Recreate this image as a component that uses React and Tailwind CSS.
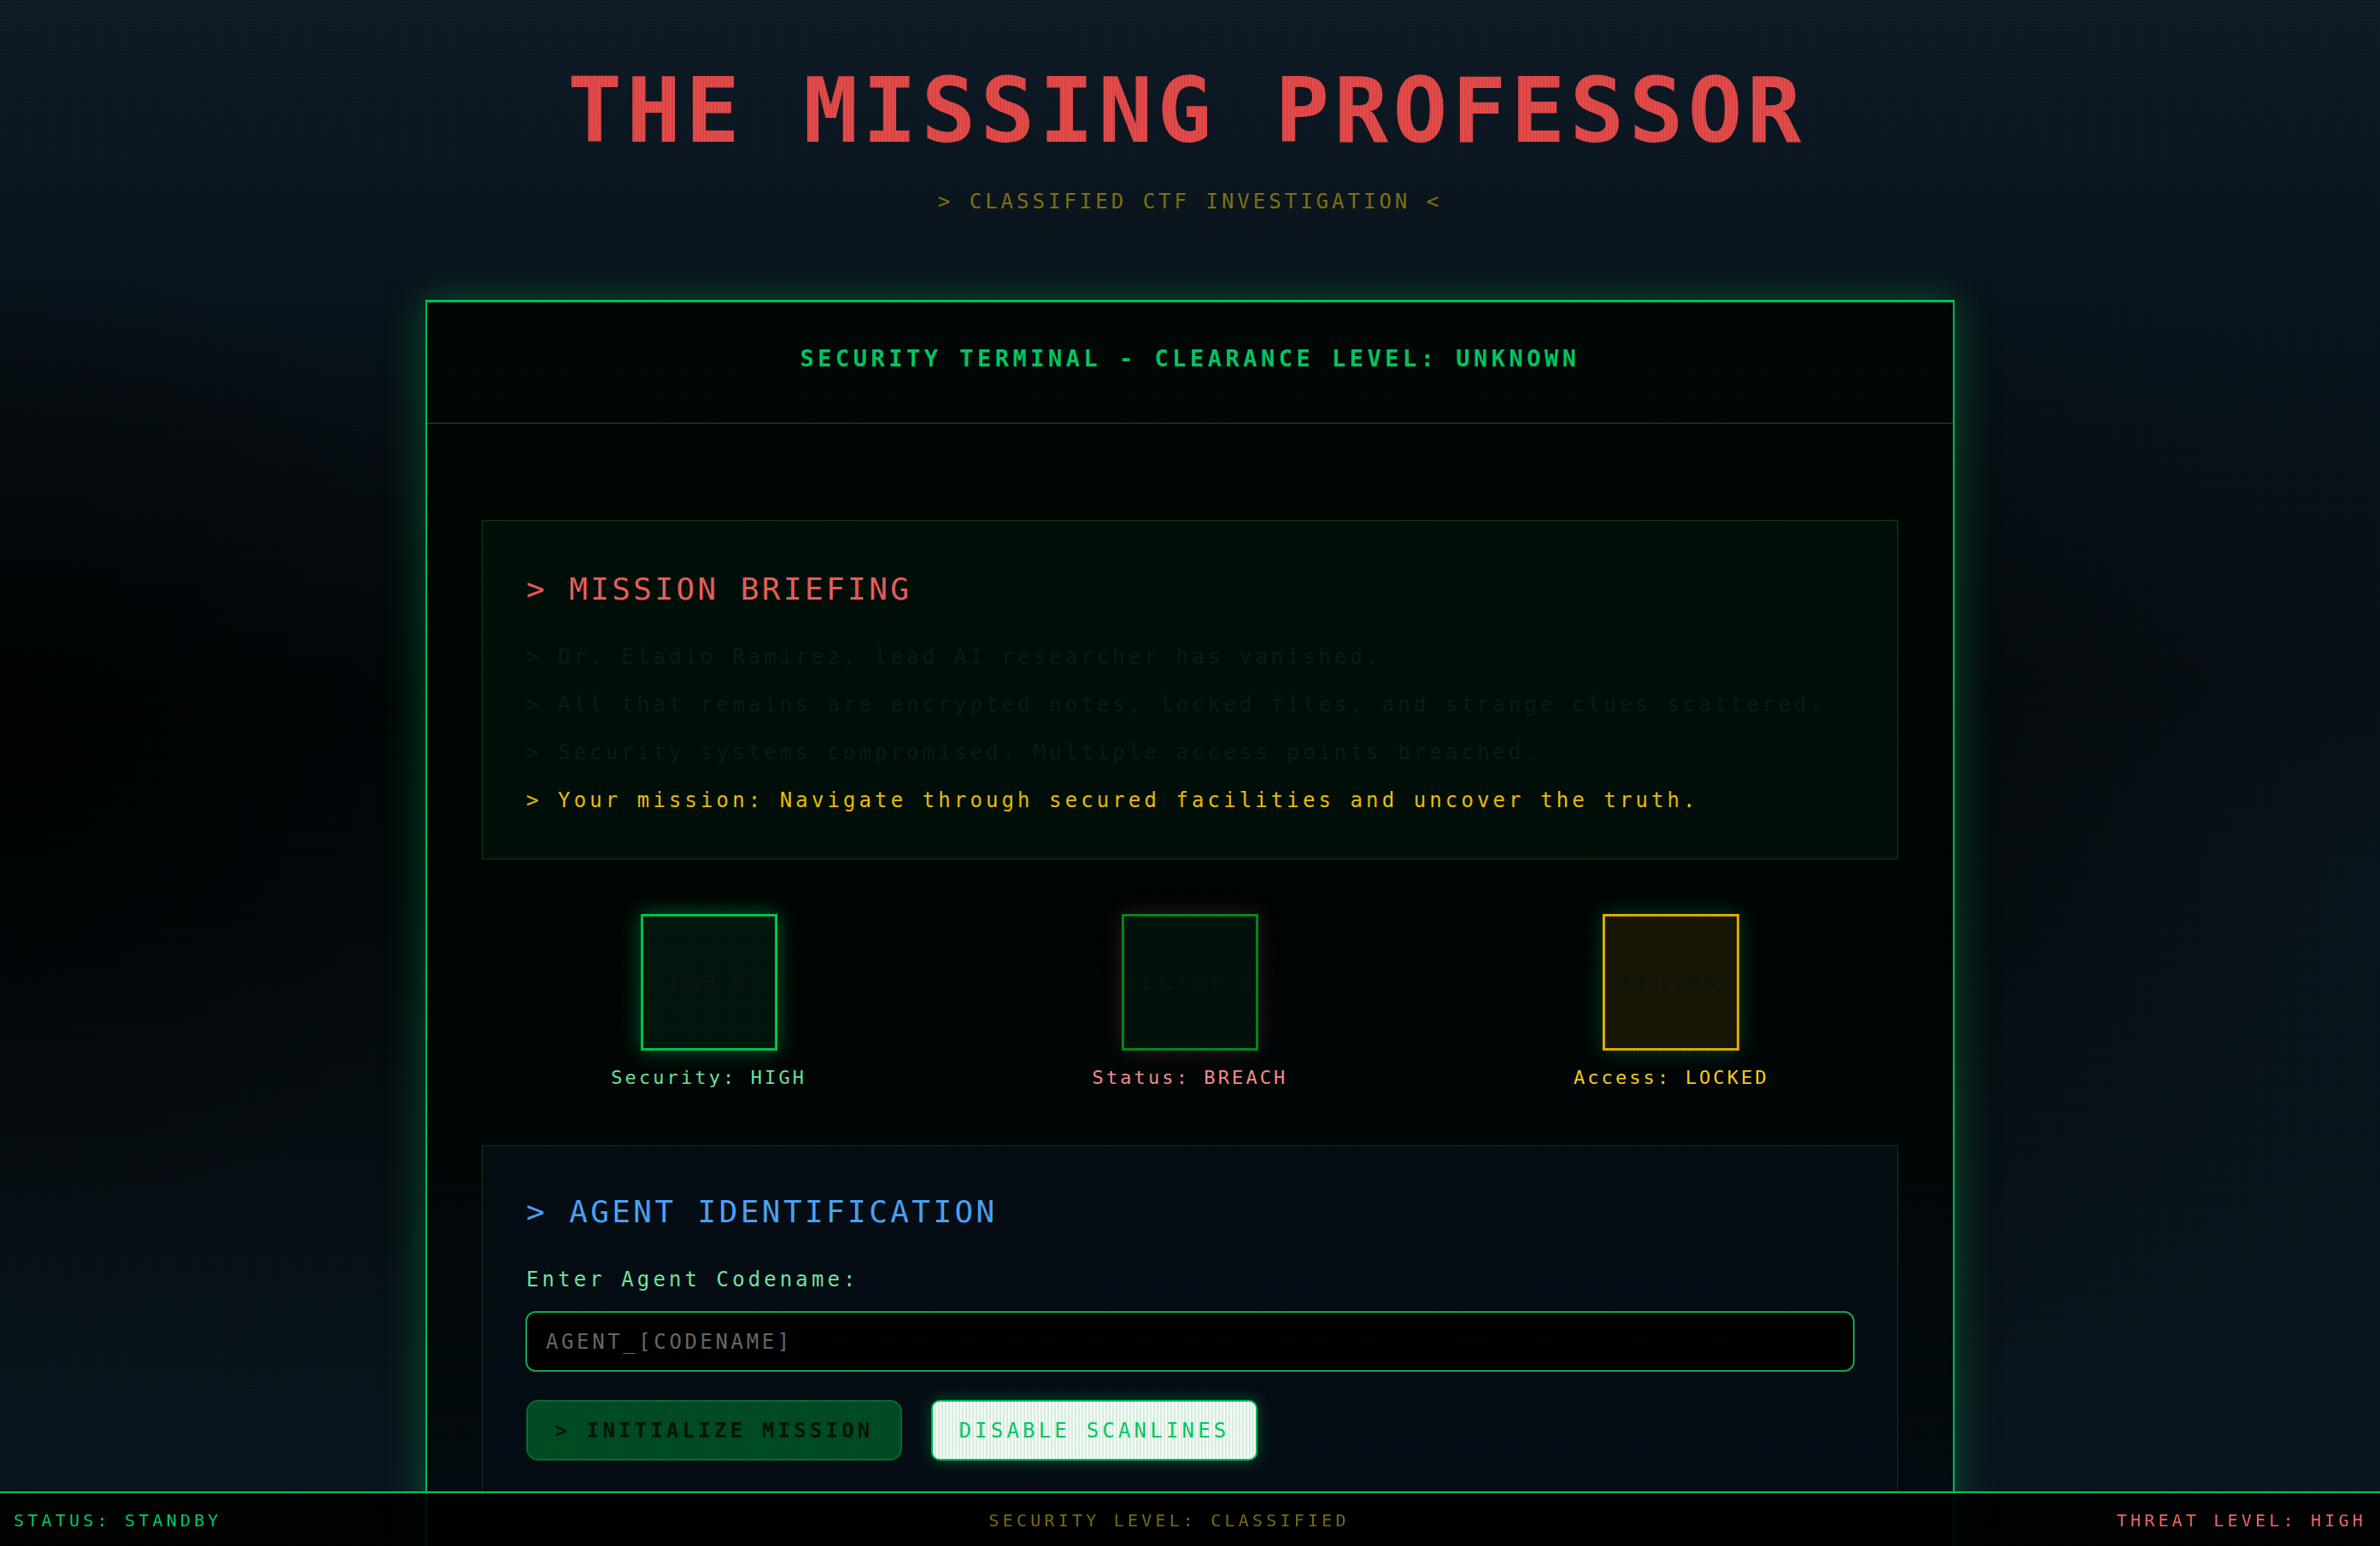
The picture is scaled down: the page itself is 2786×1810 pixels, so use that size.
import React from "react";

const mono = "font-['DejaVu_Sans_Mono',monospace]";

function StatusBox({ border, bg, shadow, title, labelA, labelB, color }) {
  return (
    <div className="flex flex-col items-center">
      <div
        className={`w-[160px] h-[160px] border-[3px] flex items-center justify-center ${border} ${bg} ${shadow}`}
      >
        <span className="font-['DejaVu_Sans',sans-serif] text-[22px] tracking-[5px] text-[#0b150f]">{title}</span>
      </div>
      <div className={`mt-4 leading-[32px] text-[22px] tracking-[3.1px] ${color}`}>
        {labelA}: {labelB}
      </div>
    </div>
  );
}

export default function App() {
  return (
    <div
      className={`relative h-screen overflow-hidden ${mono} bg-[radial-gradient(ellipse_22%_32%_at_0%_48%,rgba(0,0,0,0.75),transparent),radial-gradient(ellipse_26%_45%_at_100%_58%,rgba(16,28,40,0.55),transparent),linear-gradient(180deg,#101b28_0%,#0a131c_18%,#03070a_45%,#04090d_60%,#0a131b_90%,#0b1520_100%)]`}
    >
      {/* scanline overlay */}
      <div className="pointer-events-none fixed inset-0 z-40 bg-[repeating-linear-gradient(90deg,transparent_0px,transparent_2px,rgba(0,0,0,0.08)_2px,rgba(0,0,0,0.08)_4px)]" />
      <div className="pointer-events-none fixed inset-0 z-40 bg-[repeating-linear-gradient(0deg,transparent_0px,transparent_2px,rgba(0,255,120,0.012)_2px,rgba(0,255,120,0.012)_4px)]" />

      <header className="pt-[76px] text-center">
        <h1 className="pr-[8px] text-[106px] leading-[107px] font-bold tracking-[5.2px] text-[#e84a4a]">
          THE MISSING PROFESSOR
        </h1>
        <p className="mt-[37px] text-[24px] leading-[32px] tracking-[4px] text-[#857214]">
          &gt; CLASSIFIED CTF INVESTIGATION &lt;
        </p>
      </header>

      <main className="mx-auto mt-[99px] w-[1790px] border-2 border-t-[3px] border-[#00c65a] bg-[#010705] shadow-[0_0_45px_rgba(0,210,100,0.35)] pb-[200px]">
        <div className="border-b border-[#0a5c2c] pt-[46px] pb-[55px] text-center">
          <h2 className="text-[27px] leading-[40px] font-bold tracking-[4.5px] text-[#00cc66]">
            SECURITY TERMINAL - CLEARANCE LEVEL: UNKNOWN
          </h2>
        </div>

        <div className="px-16 pt-[113px] bg-[linear-gradient(180deg,#010604_0%,#000503_50%,#030910_100%)]">
          {/* Mission briefing */}
          <section className="border border-[#0b3d1f] bg-[#010e08] px-[51px] pt-[51px] pb-[48px]">
            <h3 className="text-[36px] leading-[58px] mb-[30px] tracking-[3.4px] text-[#f25f5c]">
              &gt; MISSION BRIEFING
            </h3>
            <div className="flex flex-col gap-4 text-[24px] leading-[40px] tracking-[4.1px]">
              <p className="text-[#0f1b14]">&gt; Dr. Eladio Ramirez, lead AI researcher has vanished.</p>
              <p className="text-[#0f1b14]">
                &gt; All that remains are encrypted notes, locked files, and strange clues scattered.
              </p>
              <p className="text-[#0f1b14]">&gt; Security systems compromised. Multiple access points breached.</p>
              <p className="text-[#f2c10a]">
                &gt; Your mission: Navigate through secured facilities and uncover the truth.
              </p>
            </div>
          </section>

          {/* Status boxes */}
          <div className="mt-[64px] grid grid-cols-3 gap-8">
            <StatusBox
              title="LAB A"
              border="border-[#00c853]"
              bg="bg-[#03150c]"
              shadow="shadow-[0_0_22px_rgba(0,200,90,0.45)]"
              labelA="Security"
              labelB="HIGH"
              color="text-[#74e6a0]"
            />
            <StatusBox
              title="SECTOR 7"
              border="border-[#008c1f]"
              bg="bg-[#02110a]"
              shadow="shadow-[0_0_22px_rgba(150,60,130,0.3)]"
              labelA="Status"
              labelB="BREACH"
              color="text-[#ff8f8f]"
            />
            <StatusBox
              title="SERVER"
              border="border-[#e6b000]"
              bg="bg-[#1a1606]"
              shadow="shadow-[0_0_22px_rgba(0,200,110,0.3)]"
              labelA="Access"
              labelB="LOCKED"
              color="text-[#ffd21f]"
            />
          </div>

          {/* Agent identification */}
          <section className="mt-[63px] border border-[#0b3520] bg-[#050c14] px-[51px] pt-[48px] pb-12">
            <h3 className="text-[36px] leading-[58px] mb-[30px] tracking-[3.4px] text-[#4da6ff]">
              &gt; AGENT IDENTIFICATION
            </h3>
            <label className="block text-[24px] leading-[40px] tracking-[4.1px] text-[#7ae8a4]">
              Enter Agent Codename:
            </label>
            <input
              type="text"
              placeholder="AGENT_[CODENAME]"
              className="mt-[17px] -ml-[1px] block h-[71px] w-[calc(100%+2px)] rounded-[12px] border-2 border-[#0fae52] bg-black px-[22px] text-[24px] tracking-[3.6px] text-[#00cc66] placeholder:text-[#6b6b6b] outline-none"
            />
            <div className="mt-[33px] flex gap-[34px]">
              <button className="h-[71px] w-[440px] rounded-[14px] border-2 border-[#0b6b33] bg-[#004d24] text-[24px] font-bold tracking-[4.2px] text-[#03140a]">
                &gt; INITIALIZE MISSION
              </button>
              <button className="h-[71px] w-[382px] rounded-[10px] border-2 border-[#00c060] bg-[#f1fdf5] text-[24px] tracking-[4.2px] text-[#00d06a] shadow-[0_0_18px_rgba(0,220,110,0.35)]">
                DISABLE SCANLINES
              </button>
            </div>
          </section>
        </div>
      </main>

      <footer className="fixed bottom-0 left-0 right-0 z-50 flex h-16 items-center justify-between border-t-2 border-[#00c853] bg-black/90 px-4 pt-[2px] text-[20px] tracking-[4.2px]">
        <span className="text-[#00cc66]">STATUS: STANDBY</span>
        <span className="text-[#7a6a10]">SECURITY LEVEL: CLASSIFIED</span>
        <span className="text-[#ee6464]">THREAT LEVEL: HIGH</span>
      </footer>
    </div>
  );
}
